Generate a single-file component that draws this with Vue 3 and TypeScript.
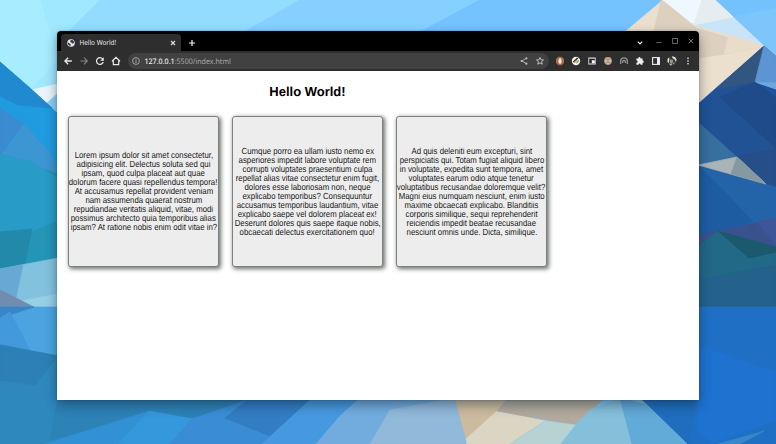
<script setup lang="ts">
interface Facet {
  points: string
  fill: string
}

const facets: Facet[] = [
  { points: '0,0 120,0 90,60 58,113 0,62', fill: '#a0e8ff' },
  { points: '0,0 40,0 58,60 30,90 0,62', fill: '#a7ecff' },
  { points: '100,0 330,0 240,40 60,40', fill: '#93dcff' },
  { points: '300,0 480,0 430,40 230,40', fill: '#86d0ff' },
  { points: '480,0 663,0 626,32 420,32', fill: '#74c2fe' },
  { points: '714,0 776,0 776,62 764,46', fill: '#73c1fd' },
  { points: '733,17 776,8 776,58 764,46', fill: '#7cc6fb' },
  { points: '31,90 58,84 58,114', fill: '#e9f5fb' },
  { points: '46,104 58,93 58,114', fill: '#8ed0f4' },
  { points: '0,62 31,89 58,114 58,180 0,150', fill: '#1f9bdf' },
  { points: '0,62 31,89 52,108 18,105 0,96', fill: '#2189cf' },
  { points: '0,108 24,124 50,153 0,162', fill: '#3a8bcf' },
  { points: '24,124 52,155 58,176 0,156', fill: '#3c96d2' },
  { points: '0,154 58,174 58,262 0,272', fill: '#2494b7' },
  { points: '0,154 32,162 58,178 58,220 30,232 0,234', fill: '#289cc6' },
  { points: '0,232 32,229 24,266 0,270', fill: '#2389aa' },
  { points: '0,269 58,258 58,308 0,308', fill: '#83c2df' },
  { points: '0,269 23,265 15,302 0,290', fill: '#67a9d2' },
  { points: '15,302 58,294 58,308 0,308', fill: '#95d0e6' },
  { points: '0,290 34,307 0,308', fill: '#718caf' },
  { points: '0,307 58,307 58,356 0,345', fill: '#4ba4df' },
  { points: '0,307 34,307 0,318', fill: '#3a85c7' },
  { points: '10,312 30,350 0,345 0,318', fill: '#4299db' },
  { points: '0,345 58,356 160,400 152,444 0,444', fill: '#2f88bd' },
  { points: '0,345 58,356 35,385 0,380', fill: '#2d80b5' },
  { points: '58,398 310,398 192,419 149,413 50,440', fill: '#2d82b6' },
  { points: '45,444 149,411 192,419 240,405 290,444', fill: '#3290d4' },
  { points: '118,444 149,411 192,419 170,444', fill: '#3598dc' },
  { points: '192,419 250,399 315,399 270,436 280,444 170,444', fill: '#3a8dd5' },
  { points: '250,398 315,398 270,436 225,418', fill: '#327dc3' },
  { points: '312,398 360,398 340,416 318,444 262,444', fill: '#4799df' },
  { points: '340,416 360,398 458,398 466,444 316,444', fill: '#72acdf' },
  { points: '390,410 456,398 466,444 370,444', fill: '#91b9d9' },
  { points: '455,398 520,398 497,413 466,439', fill: '#cdbb9f' },
  { points: '466,439 497,411 545,421 510,444 467,444', fill: '#dbd6c4' },
  { points: '497,411 508,398 605,398 575,425', fill: '#b2aa9c' },
  { points: '545,421 575,425 590,410 620,398 655,400 690,444 510,444', fill: '#85c0db' },
  { points: '545,421 575,425 560,444 510,444', fill: '#b6d2d2' },
  { points: '620,398 648,405 690,444 632,444', fill: '#62aad7' },
  { points: '640,398 700,398 700,444 688,444 648,405', fill: '#206dbd' },
  { points: '663,0 626,31 699,31 699,104 764,46 712,20', fill: '#ebdfcd' },
  { points: '661,0 669,0 696,28 727,37 764,46 725,54 699,58 654,31', fill: '#ddd0bf' },
  { points: '663,0 715,0 733,17 694,25', fill: '#eff8fe' },
  { points: '692,24 733,17 764,46 729,35', fill: '#cae4f7' },
  { points: '702,0 715,0 733,17 694,25', fill: '#e5edf0' },
  { points: '729,35 764,46 724,54', fill: '#e9dcc8' },
  { points: '764,46 776,57 776,308 698,308 698,104', fill: '#1e529c' },
  { points: '764,46 755,82 716,90', fill: '#315680' },
  { points: '764,46 776,56 776,89 755,82', fill: '#5d94d3' },
  { points: '755,82 776,83 776,89', fill: '#6da8dd' },
  { points: '716,90 755,83 776,98 776,149 737,157 698,120', fill: '#205294' },
  { points: '755,82 776,98 776,148 720,97', fill: '#204b8a' },
  { points: '698,122 737,157 698,166', fill: '#376f9e' },
  { points: '737,157 776,149 776,187 766,184', fill: '#264e89' },
  { points: '698,165 776,187 776,219 698,235', fill: '#2364a9' },
  { points: '698,165 726,193 753,222 698,235', fill: '#1e5ca2' },
  { points: '698,165 737,157 766,184', fill: '#a9b4b6' },
  { points: '737,157 766,184 731,174', fill: '#8599a2' },
  { points: '698,235 776,219 776,250 718,231 698,245', fill: '#39528d' },
  { points: '757,222 776,218 776,245', fill: '#3d569a' },
  { points: '718,231 776,248 776,308 698,308 698,246', fill: '#226887' },
  { points: '718,231 776,247 776,252 749,258', fill: '#1b596e' },
  { points: '698,280 776,265 776,308 698,308', fill: '#24628b' },
  { points: '698,307 776,307 776,444 688,444 698,398', fill: '#1f70c4' },
  { points: '698,345 776,372 776,420 712,444 698,430', fill: '#1d73cf' },
  { points: '718,444 764,431 740,444', fill: '#3887c7' },
]

const cards: string[][] = [
  [
    'Lorem ipsum dolor sit amet consectetur,',
    'adipisicing elit. Delectus soluta sed qui',
    'ipsam, quod culpa placeat aut quae',
    'dolorum facere quasi repellendus tempora!',
    'At accusamus repellat provident veniam',
    'nam assumenda quaerat nostrum',
    'repudiandae veritatis aliquid, vitae, modi',
    'possimus architecto quia temporibus alias',
    'ipsam? At ratione nobis enim odit vitae in?',
  ],
  [
    'Cumque porro ea ullam iusto nemo ex',
    'asperiores impedit labore voluptate rem',
    'corrupti voluptates praesentium culpa',
    'repellat alias vitae consectetur enim fugit,',
    'dolores esse laboriosam non, neque',
    'explicabo temporibus? Consequuntur',
    'accusamus temporibus laudantium, vitae',
    'explicabo saepe vel dolorem placeat ex!',
    'Deserunt dolores quis saepe itaque nobis,',
    'obcaecati delectus exercitationem quo!',
  ],
  [
    'Ad quis deleniti eum excepturi, sint',
    'perspiciatis qui. Totam fugiat aliquid libero',
    'in voluptate, expedita sunt tempora, amet',
    'voluptates earum odio atque tenetur',
    'voluptatibus recusandae doloremque velit?',
    'Magni eius numquam nesciunt, enim iusto',
    'maxime obcaecati explicabo. Blanditiis',
    'corporis similique, sequi reprehenderit',
    'reiciendis impedit beatae recusandae',
    'nesciunt omnis unde. Dicta, similique.',
  ],
]
</script>

<template>
  <main class="desktop">
    <svg class="wallpaper" viewBox="0 0 776 444" aria-hidden="true">
      <rect width="776" height="444" fill="#7fccff" />
      <polygon v-for="(f, i) in facets" :key="i" :points="f.points" :fill="f.fill" :stroke="f.fill" stroke-width=".7" />
    </svg>

    <section class="window">
      <header class="tabstrip">
        <div class="tab">
          <svg class="favicon" viewBox="0 0 8 8">
            <circle cx="4" cy="4" r="3.8" fill="#e4e6e8" />
            <path d="M1 3.2 2.4 4.5 3.7 5 3.5 6.9 1.8 6.2 .9 4.8ZM3.8 1 6 1.3 7 3 6.5 4.2 5.3 4.4 4.5 3.4 3.2 3Z" fill="#303134" />
          </svg>
          <span class="tab-title">Hello World!</span>
          <svg class="tab-close" viewBox="0 0 8 8"><path d="M2 2 6 6M6 2 2 6" stroke="#e0e0e0" stroke-width="1.1" /></svg>
        </div>
        <svg class="new-tab" viewBox="0 0 8 8"><path d="M4 .9V7.1M.9 4H7.1" stroke="#f2f2f2" stroke-width="1.2" /></svg>
        <div class="controls">
          <svg class="chevron" viewBox="0 0 16 16"><path d="M5.8 8.6 8 10.8 10.2 8.6" stroke="#f0f0f0" stroke-width="1.2" fill="none" /></svg>
          <svg viewBox="0 0 16 16"><path d="M5.3 9.5h5.4" stroke="#5d5d5d" /></svg>
          <svg viewBox="0 0 16 16"><rect x="5.6" y="5.5" width="4.9" height="4.9" stroke="#6b6b6b" stroke-width=".95" fill="none" /></svg>
          <svg viewBox="0 0 16 16"><path d="M5.7 5.7 10.3 10.3M10.3 5.7 5.7 10.3" stroke="#747474" stroke-width="1" /></svg>
        </div>
      </header>

      <nav class="toolbar">
        <svg class="icon" viewBox="0 0 16 16"><path d="M11.8 8H5M8.2 4.7 4.9 8 8.2 11.3" stroke="#e8e8e8" stroke-width="1.3" fill="none" /></svg>
        <svg class="icon" viewBox="0 0 16 16"><path d="M4.5 8H11.3M8 4.7 11.3 8 8 11.3" stroke="#858585" stroke-width="1.1" fill="none" /></svg>
        <svg class="icon" viewBox="0 0 16 16"><path d="M10.6 5.9A3.4 3.4 0 1 0 11.2 9" stroke="#e8e8e8" stroke-width="1.25" fill="none" /><path d="M11.8 4.2v3.6H8.2Z" fill="#e8e8e8" /></svg>
        <svg class="icon" viewBox="0 0 16 16"><path d="M4 8.2 8 4.4l4 3.8M5.3 7.3v4.3h5.4V7.3" stroke="#e8e8e8" stroke-width="1.2" fill="none" /></svg>
        <div class="omnibox">
          <svg class="info" viewBox="0 0 8 8"><circle cx="4" cy="4" r="3.4" stroke="#b4b7ba" stroke-width=".8" fill="none" /><path d="M4 3.6V6M4 2v.9" stroke="#b4b7ba" stroke-width=".9" /></svg>
          <span class="url"><b>127.0.0.1</b>:5500/index.html</span>
          <svg class="icon share" viewBox="0 0 16 16"><path d="M10.4 5.3 5.8 8l4.6 2.7" stroke="#b8babd" stroke-width=".9" fill="none" /><g fill="#b8babd"><circle cx="10.4" cy="5.3" r="1.1" /><circle cx="5.7" cy="8" r="1.1" /><circle cx="10.4" cy="10.7" r="1.1" /></g></svg>
          <svg class="icon" viewBox="0 0 16 16"><path d="m8 4.5 1 2.3 2.5.2-1.9 1.7.6 2.5L8 9.9l-2.2 1.3.6-2.5L4.5 7 7 6.8Z" stroke="#c1c3c6" stroke-width=".95" fill="none" /></svg>
        </div>
        <div class="extensions">
          <svg class="icon" viewBox="0 0 16 16"><path d="M6.2 3.8h3.6L12 6v4l-2.2 2.2H6.2L4 10V6Z" fill="#a8674b" /><path d="M6.4 8.2V6.6h.7V5.4h.7v-.5h.6v.6h.7v1h.5v3L8.8 10.8H7.4L6.3 9Z" fill="#f2e5dc" /></svg>
          <svg class="icon" viewBox="0 0 16 16"><circle cx="8" cy="8" r="4.2" fill="#f4f5ee" /><path d="M4.7 8.7 9 4.4l1.3.8-4 4.5Z" fill="#243039" /><path d="m6.1 8.5 3.8-2.2-.9 2.4-1.6 1.1Z" fill="#eca837" /><path d="m9 8.7 2.1-2-.4 2-2.8 2Z" fill="#3e9382" /></svg>
          <svg class="icon" viewBox="0 0 16 16"><rect x="4" y="4.2" width="8" height="7.6" rx=".8" fill="#a5a6aa" /><rect x="5.3" y="6" width="5.5" height="4.2" fill="#25262a" /><rect x="7.8" y="7.3" width="3" height="2.9" fill="#fff" /></svg>
          <svg class="icon" viewBox="0 0 16 16"><circle cx="8" cy="8" r="3.9" fill="#b98560" /><path d="M4.5 6.3 6 4.5h4l1.5 2Z" fill="#d4a464" /><circle cx="6" cy="7.9" r="1.5" fill="#a7ccd7" /><circle cx="10" cy="7.9" r="1.5" fill="#a7ccd7" /><path d="M5.5 10h5L8 11.7Z" fill="#d9b79b" /></svg>
          <svg class="icon" viewBox="0 0 16 16"><path d="M4.7 11V8.2a3.3 3.3 0 0 1 6.6 0V11M6.7 10V8.6a1.3 1.3 0 0 1 2.6 0V10" stroke="#929395" stroke-width="1.35" fill="none" /></svg>
          <svg class="icon" viewBox="0 0 16 16"><path d="M4.4 5.5h2V5a1 1 0 0 1 2.1 0v.5h2v2.1h.5a1.1 1.1 0 0 1 0 2.1h-.5v2.1H8.6v-.5a1.1 1.1 0 0 0-2.1 0v.5H4.4V9.7h.5a1.1 1.1 0 0 0 0-2.1h-.5Z" fill="#f0f0f0" /></svg>
          <svg class="icon" viewBox="0 0 16 16"><rect x="4.6" y="4.6" width="6.8" height="6.8" stroke="#ededed" stroke-width="1.1" fill="none" /><path d="M9 4.6h2.4v6.8H9Z" fill="#ededed" /></svg>
          <svg class="icon" viewBox="0 0 16 16"><circle cx="8" cy="8" r="5" fill="#353536" /><path d="M5.2 4.2 3.5 6v3l1.4 1 .5-3ZM8 3.2l3 .8 1.5 2.2-.4 3-1.5-2.8L8.4 5Z" fill="#d8e2e6" /><path d="M6 6.5h2.7l.6 2.5-1.5 2.1L6 9.9Z" fill="#b28a6f" /><path d="m4.8 10.4 1.8 2.1 1.5-.4L7.5 11ZM9 10l1.8-.5-1 2.2Z" fill="#aec6d1" /></svg>
          <svg class="icon" viewBox="0 0 16 16" fill="#e2e2e2"><rect x="7.3" y="4.6" width="1.4" height="1.4" /><rect x="7.3" y="7.3" width="1.4" height="1.4" /><rect x="7.3" y="10" width="1.4" height="1.4" /></svg>
        </div>
      </nav>

      <article class="page">
        <div class="content">
          <h1>Hello World!</h1>
          <div class="cards">
            <p v-for="(lines, i) in cards" :key="i" class="card">
              <span v-for="line in lines" :key="line" class="line">{{ line }}</span>
            </p>
          </div>
        </div>
      </article>
    </section>
  </main>
</template>

<style>
body {
  margin: 0;
  overflow: hidden;
}
</style>

<style scoped>
.desktop {
  position: relative;
  box-sizing: border-box;
  width: 776px;
  height: 444px;
  padding: 31px 77px 44px 57.4px;
  overflow: hidden;
  text-rendering: geometricPrecision;
}
.wallpaper {
  position: absolute;
  inset: 0;
  width: 776px;
  height: 444px;
}
svg {
  display: block;
  flex: none;
}
.window {
  position: relative;
  display: flex;
  flex-direction: column;
  height: 369px;
  border-radius: 4px 4px 0 0;
  background: #fff;
  box-shadow: 0 5px 12px rgba(10, 30, 50, 0.45), 0 0 2px rgba(0, 0, 0, 0.25);
}
.tabstrip {
  display: flex;
  height: 20px;
  padding-left: 3.6px;
  border-radius: 4px 4px 0 0;
  background: #000;
  font-family: "Noto Sans", sans-serif;
}
.tab {
  display: flex;
  align-items: center;
  box-sizing: border-box;
  width: 120.5px;
  height: 17px;
  margin-top: 3px;
  padding: 0 4px 0 6.5px;
  border-radius: 4px 4px 0 0;
  background: #2e2e2e;
}
.favicon {
  width: 8px;
  height: 8px;
}
.tab-title {
  margin: 1px 0 0 4px;
  color: #e8e8e8;
  font-size: 6.4px;
  line-height: 10px;
  white-space: nowrap;
  transform: scaleY(1.08);
}
.tab-close {
  width: 8px;
  height: 8px;
  margin-left: auto;
}
.new-tab {
  width: 8px;
  height: 8px;
  margin: 8px 0 0 6.5px;
}
.controls {
  display: flex;
  margin: 2px 0 0 auto;
}
.controls svg {
  width: 16px;
  height: 16px;
}
.controls .chevron {
  margin-right: 3px;
}
.toolbar {
  display: flex;
  align-items: center;
  box-sizing: border-box;
  height: 20px;
  padding: 0 3px 0 2.6px;
  background: #2e2e2e;
}
.icon {
  width: 16px;
  height: 16px;
}
.omnibox {
  display: flex;
  align-items: center;
  box-sizing: border-box;
  width: 421px;
  height: 16px;
  margin-left: 4px;
  padding: 0 1px 0 4.5px;
  border-radius: 8px;
  background: #414141;
  color: #a8a8aa;
  font: 7.1px/10px "Noto Sans", sans-serif;
}
.omnibox b {
  color: #f0f0f0;
  font-weight: 500;
}
.info {
  width: 8px;
  height: 8px;
}
.url {
  margin: 1.5px 0 0 4px;
  white-space: nowrap;
  transform: scaleY(1.08);
}
.share {
  margin-left: auto;
}
.extensions {
  display: flex;
  margin-left: auto;
}
.page {
  flex: 1;
  padding: 12.5px 0 0 10.6px;
  font-family: "Liberation Sans", Arial, sans-serif;
}
.content {
  width: 479px;
}
h1 {
  margin: 0 0 17px;
  color: #000;
  font-size: 13px;
  line-height: 15.5px;
  text-align: center;
}
.cards {
  display: flex;
  gap: 13px;
}
.card {
  display: flex;
  flex-direction: column;
  align-items: center;
  justify-content: center;
  box-sizing: border-box;
  width: 151px;
  height: 151px;
  margin: 0;
  border: 1px solid #7b827b;
  border-radius: 3px;
  background: #ededed;
  box-shadow: 1.5px 1.5px 4px rgba(30, 40, 30, 0.65);
  color: #181818;
  font-size: 8px;
  line-height: 9px;
}
.line {
  white-space: nowrap;
  transform: scale(0.977, 1.1);
}
</style>
